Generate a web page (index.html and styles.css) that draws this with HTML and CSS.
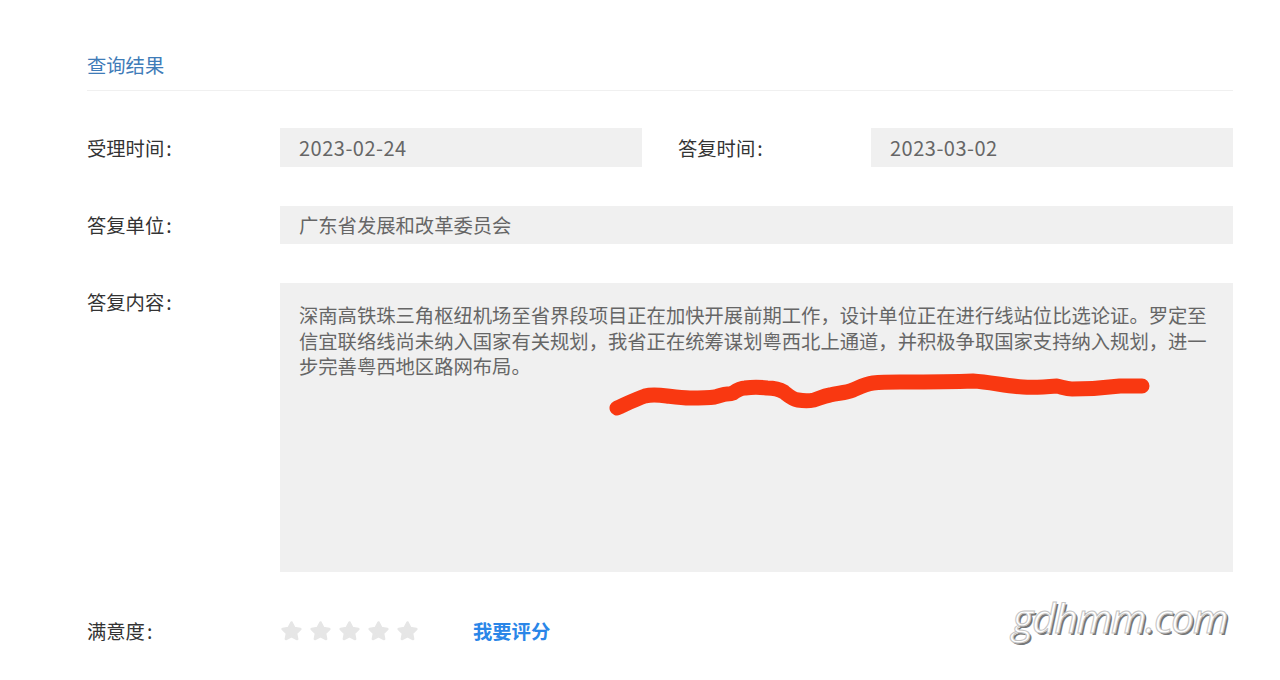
FILE: index.html
```html
<!DOCTYPE html>
<html lang="zh-CN">
<head>
<meta charset="utf-8">
<title>查询结果</title>
<link rel="stylesheet" href="styles.css">
</head>
<body>
<main class="page">
  <h2 class="title">查询结果</h2>
  <div class="form">
    <div class="label label-top">受理时间<span class="colon">:</span></div>
    <div class="field field-date">2023-02-24</div>
    <div class="label label-top label-second">答复时间<span class="colon">:</span></div>
    <div class="field field-date">2023-03-02</div>

    <div class="label">答复单位<span class="colon">:</span></div>
    <div class="field field-wide">广东省发展和改革委员会</div>

    <div class="label">答复内容<span class="colon">:</span></div>
    <div class="field field-wide field-content">深南高铁珠三角枢纽机场至省界段项目正在加快开展前期工作，设计单位正在进行线站位比选论证。罗定至信宜联络线尚未纳入国家有关规划，我省正在统筹谋划粤西北上通道，并积极争取国家支持纳入规划，进一步完善粤西地区路网布局。</div>

    <div class="label label-rate">满意度<span class="colon">:</span></div>
    <div class="rate">
      <svg class="stars" width="138" height="22" viewBox="0 0 138 22">
        <defs>
          <path id="star" d="M10.5 2.5 L13.4 8 L19.3 9 L15 13.2 L16.1 19 L10.5 16.2 L4.9 19 L6 13.2 L1.7 9 L7.6 8 Z" fill="#e6e6e6" stroke="#e6e6e6" stroke-width="2.6" stroke-linejoin="round"/>
        </defs>
        <use href="#star" x="0"/>
        <use href="#star" x="29"/>
        <use href="#star" x="58"/>
        <use href="#star" x="87"/>
        <use href="#star" x="116"/>
      </svg>
      <a class="rate-link" href="#">我要评分</a>
    </div>
  </div>
</main>
<svg class="scribble" width="1280" height="680" viewBox="0 0 1280 680">
  <path d="M617 408 C626 404 636 399 645 396 C652 394 660 395 667 396 C675 397 682 398 690 398 C699 398 707 398 715 397 C720 396 723 394 727 394 C729 394 731 394 733 393 C737 390 740 388 745 388 C752 387 760 387 767 388 C774 388 779 389 784 392 C789 396 792 399 798 400 C804 401 809 401 814 400 C820 398 824 396 830 395 C838 393 846 393 853 390 C860 387 866 384 873 383 C882 382 891 382 900 382 C925 382 950 382 973 381 C990 382 1006 386 1023 387 C1034 388 1046 387 1057 386 C1062 387 1066 389 1072 389 C1088 389 1104 388 1120 386 C1127 386 1135 386 1142 386" fill="none" stroke="#f93811" stroke-width="15" stroke-linecap="round" stroke-linejoin="round"/>
</svg>
<div class="watermark">gdhmm.com</div>
</body>
</html>
```
FILE: styles.css
```css
* { box-sizing: border-box; }
html, body { margin: 0; padding: 0; background: #fff; }
body {
  width: 1280px;
  height: 680px;
  overflow: hidden;
  position: relative;
  font-family: "Noto Sans CJK SC", "Noto Sans", sans-serif;
  font-size: 19.32px;
  color: #333;
}
.page { padding: 40px 47px 0 87px; }
.title {
  margin: 0;
  height: 51px;
  line-height: 50px;
  font-size: 19.32px;
  font-weight: 400;
  color: #3f7cb8;
  border-bottom: 1px solid #f0f0f0;
}
.form {
  display: grid;
  grid-template-columns: 193px 362px 36px 193px 362px;
  grid-template-rows: 39px 38px 289px auto;
  row-gap: 39px;
  margin-top: 37px;
}
.label { line-height: 39px; color: #333; }
.label-top { line-height: 41px; }
.label-second { grid-column: 4; }
.colon { margin-left: 2px; }
.field {
  background: #f0f0f0;
  color: #666;
  padding: 0 19px;
  line-height: 39px;
}
.field-date { font-size: 20px; letter-spacing: 0.5px; }
.field:nth-child(4) { grid-column: 5; }
.field-wide { grid-column: 2 / 6; line-height: 38px; }
.field-content { padding: 20px 19px; line-height: 25.5px; }
.label-rate { margin-top: 1px; }
.rate { grid-column: 2 / 6; display: flex; align-items: center; gap: 55px; height: 39px; }
.stars { display: block; flex: none; margin-left: 1px; }
.rate-link { color: #2a86e8; font-weight: 700; text-decoration: none; margin-left: -1px; }
.scribble { position: absolute; left: 0; top: 0; pointer-events: none; }
.watermark {
  position: absolute;
  left: 1012px;
  top: 592px;
  font-family: "Open Sans", sans-serif;
  font-style: italic;
  font-weight: 400;
  font-size: 41px;
  line-height: 50px;
  letter-spacing: -1.4px;
  color: #fff;
  -webkit-text-stroke: 1px #c4c4c4;
  text-shadow: 2px 2px 0 #777;
}
```
